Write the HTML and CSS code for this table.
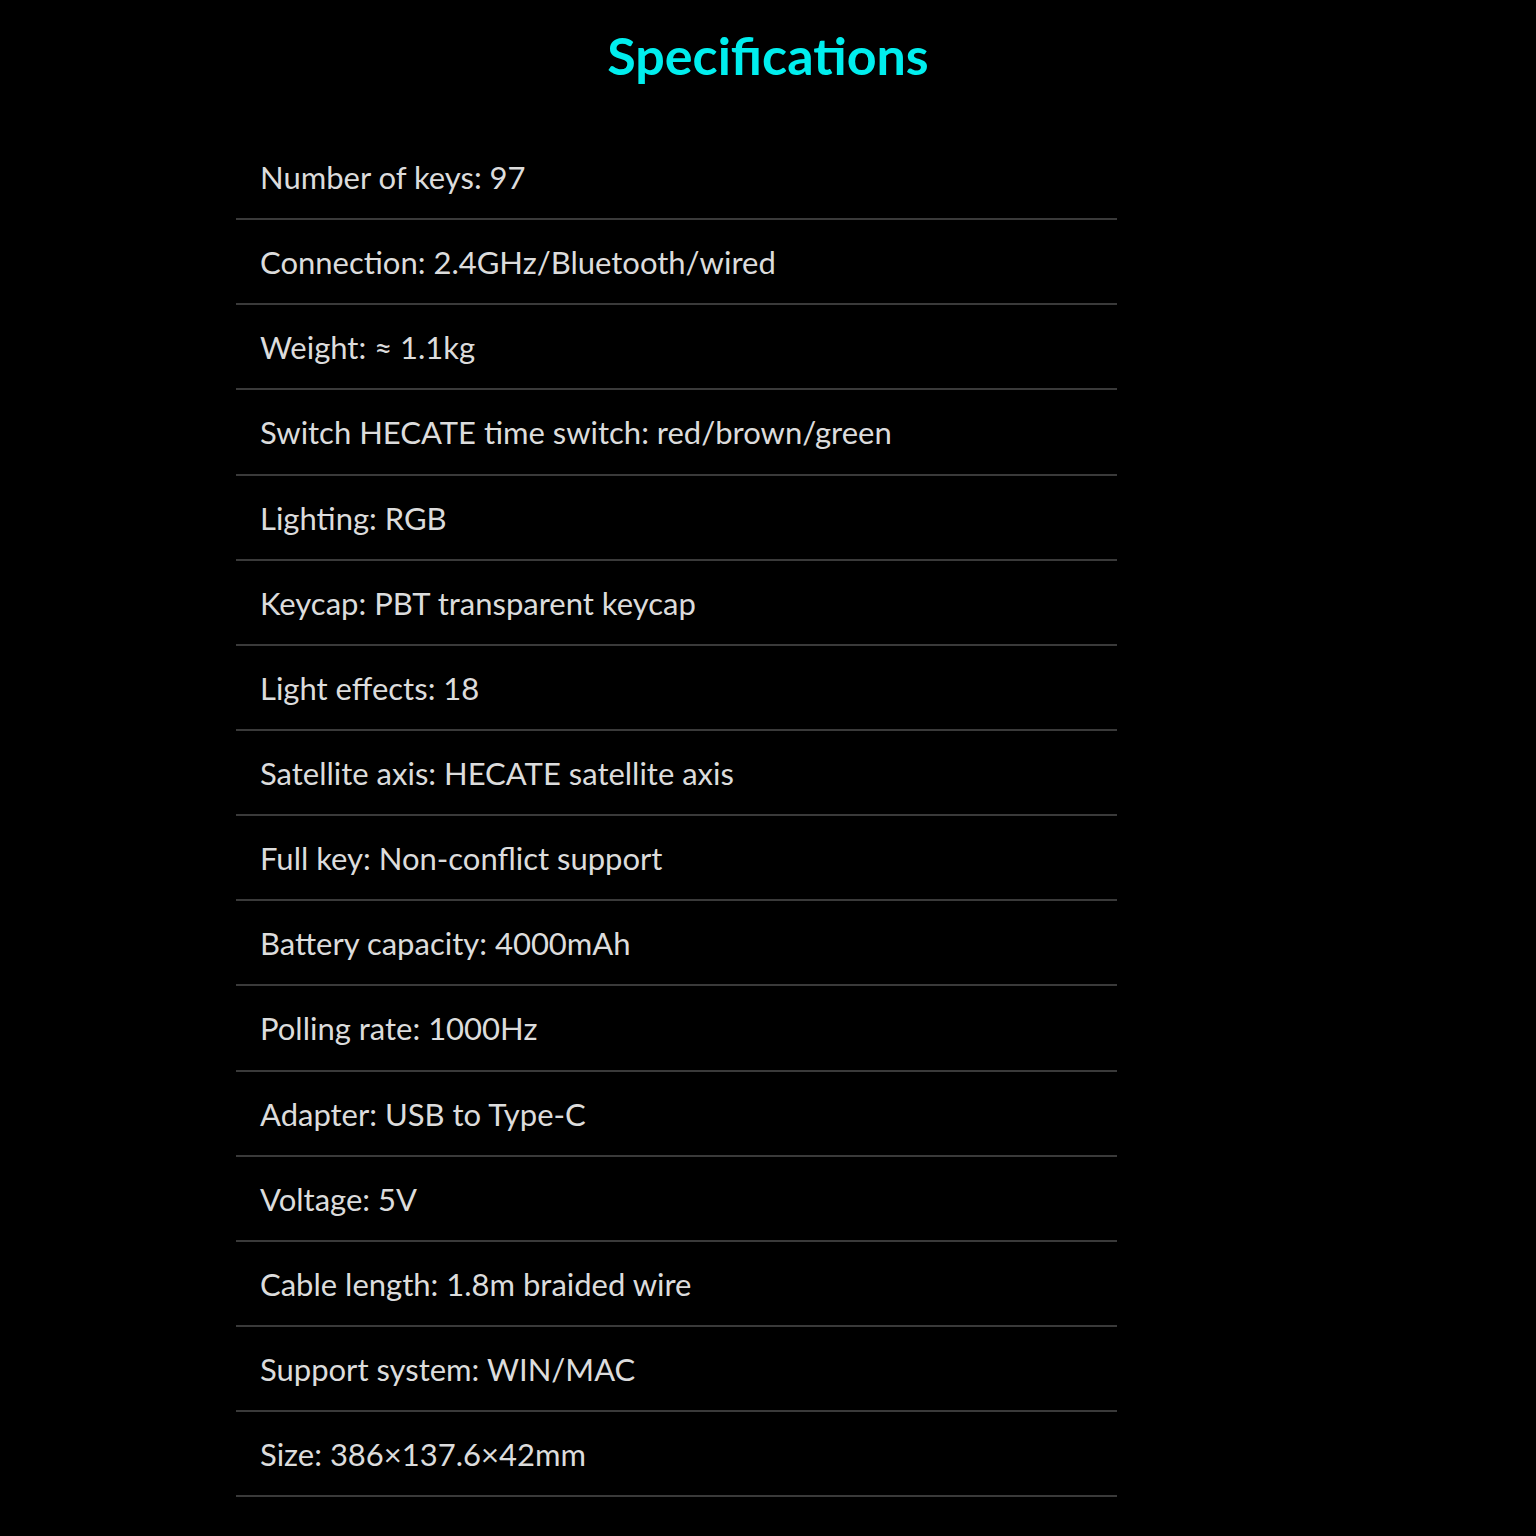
FILE: index.html
```html
<!DOCTYPE html>
<html>
<head>
<meta charset="utf-8">
<link rel="stylesheet" href="styles.css">
</head>
<body>
<div class="page">
  <h1 class="title">Specifications</h1>
  <ul class="specs">
    <li class="row">Number of keys: 97</li>
    <li class="row">Connection: 2.4GHz/Bluetooth/wired</li>
    <li class="row">Weight: ≈ 1.1kg</li>
    <li class="row">Switch HECATE time switch: red/brown/green</li>
    <li class="row">Lighting: RGB</li>
    <li class="row">Keycap: PBT transparent keycap</li>
    <li class="row">Light effects: 18</li>
    <li class="row">Satellite axis: HECATE satellite axis</li>
    <li class="row">Full key: Non-conflict support</li>
    <li class="row">Battery capacity: 4000mAh</li>
    <li class="row">Polling rate: 1000Hz</li>
    <li class="row">Adapter: USB to Type-C</li>
    <li class="row">Voltage: 5V</li>
    <li class="row">Cable length: 1.8m braided wire</li>
    <li class="row">Support system: WIN/MAC</li>
    <li class="row">Size: 386×137.6×42mm</li>
  </ul>
</div>
</body>
</html>
```
FILE: styles.css
```css
html, body {
  margin: 0;
  padding: 0;
  background: #000;
}
.page {
  width: 1536px;
  height: 1536px;
  background: #000;
  overflow: hidden;
}
.title {
  margin: 0;
  height: 135px;
  box-sizing: border-box;
  padding-top: 24px;
  text-align: center;
  font-family: "Lato", "Noto Sans", sans-serif;
  font-weight: 700;
  font-size: 52px;
  line-height: 62px;
  color: #00eeee;
}
.specs {
  list-style: none;
  margin: 0 0 0 236px;
  padding: 0;
  width: 881px;
}
.row {
  height: 85.15px;
  box-sizing: border-box;
  border-bottom: 2px solid #3a3a3a;
  padding: 1px 0 0 24px;
  display: flex;
  align-items: center;
  font-family: "Lato", "Noto Sans", sans-serif;
  font-size: 31px;
  color: #dcdcdc;
}
```
